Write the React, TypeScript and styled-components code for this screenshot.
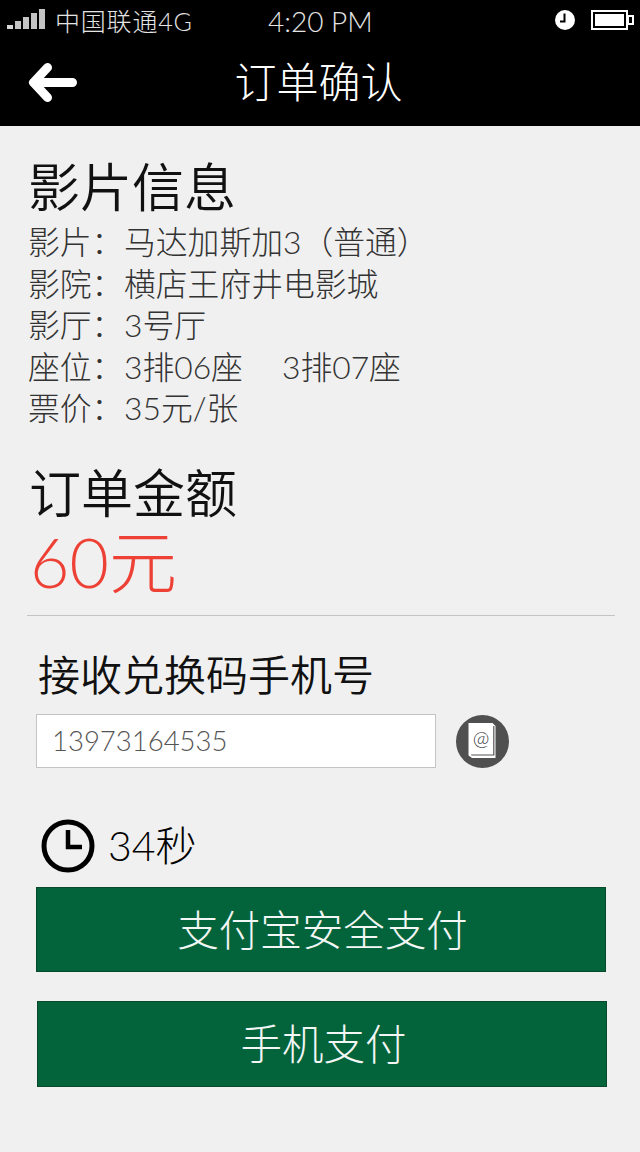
import React from "react";
import styled, { createGlobalStyle } from "styled-components";

const GlobalStyle = createGlobalStyle`
  html, body {
    margin: 0;
    padding: 0;
    background: #f0f0f0;
  }
  body {
    font-family: Lato, "Noto Sans CJK SC", sans-serif;
    font-weight: 300;
  }
`;

const App = () => {
  return (
    <Page>
      <GlobalStyle />
      <Header>
        <StatusBar>
          <Carrier>
            <SignalIcon />
            <CarrierName>中国联通4G</CarrierName>
          </Carrier>
          <Time>4:20 PM</Time>
          <StatusRight>
            <AlarmIcon />
            <BatteryIcon />
          </StatusRight>
        </StatusBar>
        <NavBar>
          <BackIcon />
          <NavTitle>订单确认</NavTitle>
        </NavBar>
      </Header>

      <Main>
        <MovieSection>
          <SectionTitle>影片信息</SectionTitle>
          <InfoRow>
            <InfoLabel>影片：</InfoLabel>马达加斯加3（普通）
          </InfoRow>
          <InfoRow>
            <InfoLabel>影院：</InfoLabel>横店王府井电影城
          </InfoRow>
          <InfoRow>
            <InfoLabel>影厅：</InfoLabel>3号厅
          </InfoRow>
          <InfoRow>
            <InfoLabel>座位：</InfoLabel>
            <Seat>3排06座</Seat>3排07座
          </InfoRow>
          <InfoRow>
            <InfoLabel>票价：</InfoLabel>35元/张
          </InfoRow>
        </MovieSection>

        <AmountSection>
          <SectionTitle>订单金额</SectionTitle>
          <Amount>60元</Amount>
        </AmountSection>

        <Divider />

        <PhoneSection>
          <PhoneTitle>接收兑换码手机号</PhoneTitle>
          <PhoneRow>
            <PhoneField>13973164535</PhoneField>
            <ContactButton>
              <ContactIcon />
            </ContactButton>
          </PhoneRow>
        </PhoneSection>

        <Countdown>
          <ClockIcon />
          <CountdownText>34秒</CountdownText>
        </Countdown>

        <PayButton>支付宝安全支付</PayButton>
        <PayButton $second>手机支付</PayButton>
      </Main>
    </Page>
  );
};

export default App;

const SignalIcon = () => (
  <svg width="38" height="22" viewBox="0 0 38 22">
    <rect x="0" y="16" width="6" height="4" fill="#d8d8d8" />
    <rect x="8" y="12" width="6" height="8" fill="#c4c4c4" />
    <rect x="16" y="8" width="6" height="12" fill="#c4c4c4" />
    <rect x="24" y="4" width="6" height="16" fill="#c4c4c4" />
    <rect x="32" y="0" width="6" height="20" fill="#c4c4c4" />
  </svg>
);

const AlarmIcon = () => (
  <svg width="20" height="20" viewBox="0 0 20 20">
    <circle cx="10" cy="10" r="10" fill="#fff" />
    <path d="M9.5 3.5v8H5" fill="none" stroke="#000" strokeWidth="2" />
  </svg>
);

const BatteryIcon = () => (
  <svg width="43" height="20" viewBox="0 0 43 20">
    <rect x="1" y="1" width="35" height="18" fill="none" stroke="#fff" strokeWidth="2" />
    <rect x="4" y="4" width="29" height="12" fill="#fff" />
    <rect x="37" y="6" width="5" height="8" fill="none" stroke="#fff" strokeWidth="2" />
  </svg>
);

const BackIcon = () => (
  <svg width="50" height="42" viewBox="0 0 50 42">
    <path
      d="M20.5 7.5 L6.5 22.5 L20.5 37.5 M6.5 22.5 H45.5"
      fill="none"
      stroke="#fff"
      strokeWidth="9"
      strokeLinecap="round"
      strokeLinejoin="round"
    />
  </svg>
);

const ContactIcon = () => (
  <svg width="30" height="36" viewBox="0 0 30 36">
    <path d="M0.5 0h24l3 3v32H4l-3.5-2.5z" fill="#fff" />
    <path d="M25.8 3v29H3.2" fill="none" stroke="#555" strokeWidth="1.2" />
    <text x="13" y="22" textAnchor="middle" fontSize="20" fill="#333" fontFamily="Lato, sans-serif" fontWeight="300">
      @
    </text>
  </svg>
);

const ClockIcon = () => (
  <svg width="54" height="54" viewBox="0 0 54 54">
    <circle cx="27" cy="27" r="24" fill="none" stroke="#000" strokeWidth="5" />
    <path d="M27 11v17h14" fill="none" stroke="#000" strokeWidth="4.5" />
  </svg>
);

const Page = styled.div`
  width: 640px;
  height: 1152px;
  overflow: hidden;
  background: #f0f0f0;
`;

const Header = styled.header`
  height: 126px;
  background: #000;
  color: #fff;
`;

const StatusBar = styled.div`
  position: relative;
  display: flex;
  align-items: center;
  justify-content: space-between;
  box-sizing: border-box;
  height: 44px;
  padding: 0 6px 4px 7px;
`;

const Carrier = styled.div`
  display: flex;
  align-items: center;
  gap: 10px;
`;

const CarrierName = styled.span`
  font-size: 25px;
  letter-spacing: 0.8px;
  color: #e4e4e4;
`;

const Time = styled.span`
  position: absolute;
  left: 268px;
  top: 4px;
  font-size: 28px;
  line-height: 34px;
  color: #e4e4e4;
`;

const StatusRight = styled.div`
  display: flex;
  align-items: center;
  gap: 16px;
`;

const NavBar = styled.div`
  position: relative;
  display: flex;
  align-items: center;
  justify-content: center;
  height: 78px;
  padding: 0 3px 3px 0;
  box-sizing: border-box;
  svg {
    position: absolute;
    left: 27px;
    top: 16px;
  }
`;

const NavTitle = styled.h1`
  margin: 0;
  font-size: 42px;
  font-weight: 300;
  line-height: 1;
`;

const Main = styled.main`
  display: flex;
  flex-direction: column;
`;

const MovieSection = styled.section`
  padding: 26px 0 0 28px;
`;

const SectionTitle = styled.h2`
  margin: 0;
  font-size: 52px;
  font-weight: 350;
  line-height: 70px;
  color: #111;
`;

const InfoRow = styled.div`
  font-size: 31.8px;
  line-height: 41.5px;
  color: #333;
`;

const InfoLabel = styled.span`
  display: inline-block;
  width: 96px;
`;

const Seat = styled.span`
  display: inline-block;
  width: 158px;
`;

const AmountSection = styled.section`
  padding: 28px 0 0 29px;
`;

const Amount = styled.div`
  margin: -4px 0 0 1px;
  font-size: 68px;
  line-height: 76px;
  color: #ee4136;
`;

const Divider = styled.hr`
  width: 588px;
  height: 1px;
  margin: 15px 0 0 27px;
  border: 0;
  background: #c4c4c4;
`;

const PhoneSection = styled.section`
  padding: 34px 0 0 36px;
`;

const PhoneTitle = styled.h3`
  margin: 0 0 14px 2px;
  font-size: 42px;
  font-weight: 350;
  line-height: 50px;
  color: #111;
`;

const PhoneRow = styled.div`
  display: flex;
  align-items: flex-start;
  gap: 20px;
`;

const PhoneField = styled.div`
  box-sizing: border-box;
  width: 400px;
  height: 54px;
  padding-left: 15px;
  border: 1px solid #c4c4c4;
  background: #fff;
  font-size: 27.5px;
  line-height: 52px;
  color: #555;
`;

const ContactButton = styled.div`
  display: flex;
  align-items: center;
  justify-content: center;
  width: 53px;
  height: 53px;
  margin-top: 1px;
  border-radius: 50%;
  background: #505050;
`;

const Countdown = styled.div`
  display: flex;
  align-items: center;
  gap: 13px;
  margin: 51px 0 0 41px;
`;

const CountdownText = styled.span`
  font-size: 41px;
  line-height: 54px;
  color: #000;
`;

const PayButton = styled.div<{ $second?: boolean }>`
  box-sizing: border-box;
  width: 570px;
  height: ${(p) => (p.$second ? "86px" : "85px")};
  margin: ${(p) => (p.$second ? "29px 0 0 37px" : "14px 0 0 36px")};
  padding-left: 3px;
  border: 1px solid #084a2a;
  background: #03643c;
  color: #f2f6f4;
  font-size: 41.5px;
  line-height: 84px;
  text-align: center;
`;
